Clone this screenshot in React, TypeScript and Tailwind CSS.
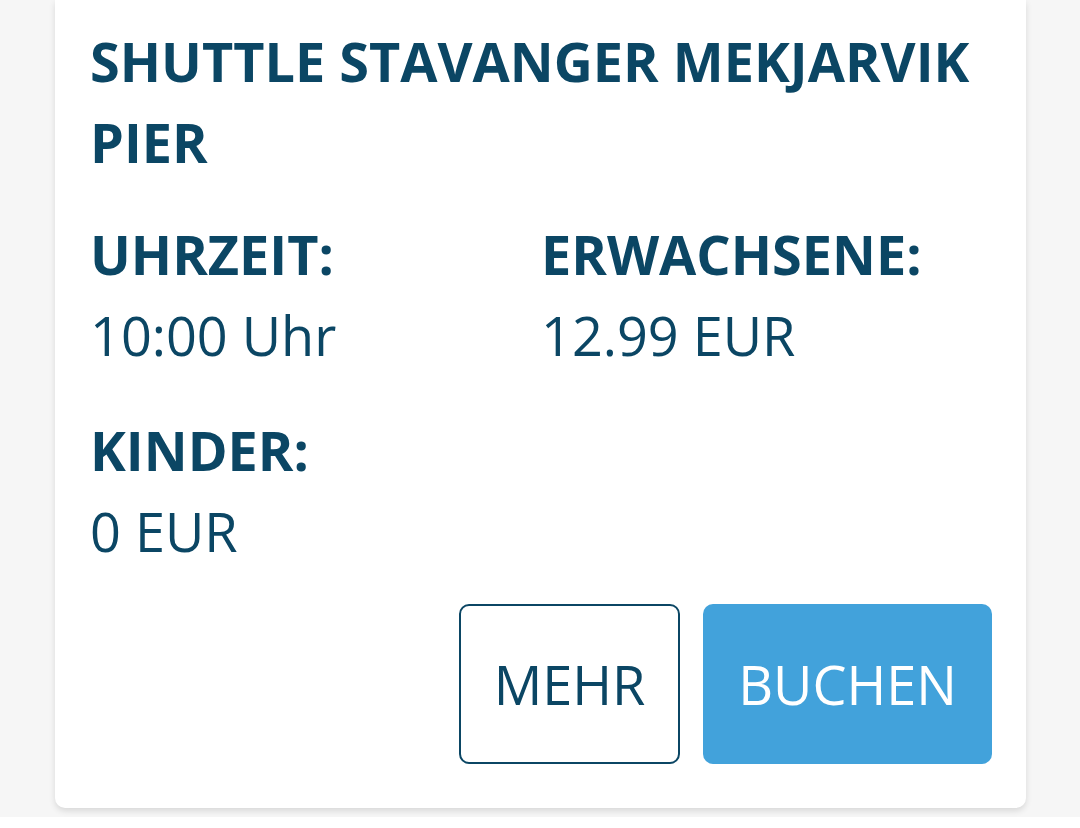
const ink = "text-[#0b4664]";

const InfoItem = ({ label, value }: { label: string; value: string }) => (
  <div>
    <p className={`font-bold uppercase ${ink}`}>{label}</p>
    <p className={ink}>{value}</p>
  </div>
);

export default function App() {
  return (
    <div className="h-[828px] overflow-hidden bg-white font-['Open_Sans','Noto_Sans',sans-serif] text-[54px] leading-[81px]">
      <div className="h-[817px] bg-[#f6f6f6] pl-[55px] pr-[54px]">
        <article className="rounded-b-[10px] bg-white pb-[44px] pl-[35px] pr-[34px] pt-[21px] shadow-[0_3px_6px_rgba(0,0,0,0.12)]">
          <h1 className={`font-bold uppercase ${ink}`}>Shuttle Stavanger Mekjarvik Pier</h1>

          <div className="mt-[31px] grid grid-cols-2 gap-y-[34px]">
            <InfoItem label="Uhrzeit:" value="10:00 Uhr" />
            <InfoItem label="Erwachsene:" value="12.99 EUR" />
            <InfoItem label="Kinder:" value="0 EUR" />
          </div>

          <div className="mt-[32px] flex justify-end gap-[23px]">
            <button
              className={`h-[160px] w-[221px] rounded-[10px] border-2 border-[#0b4664] bg-white uppercase ${ink}`}
            >
              Mehr
            </button>
            <button className="h-[160px] w-[289px] rounded-[10px] bg-[#42a2db] uppercase text-white">
              Buchen
            </button>
          </div>
        </article>
      </div>
    </div>
  );
}
